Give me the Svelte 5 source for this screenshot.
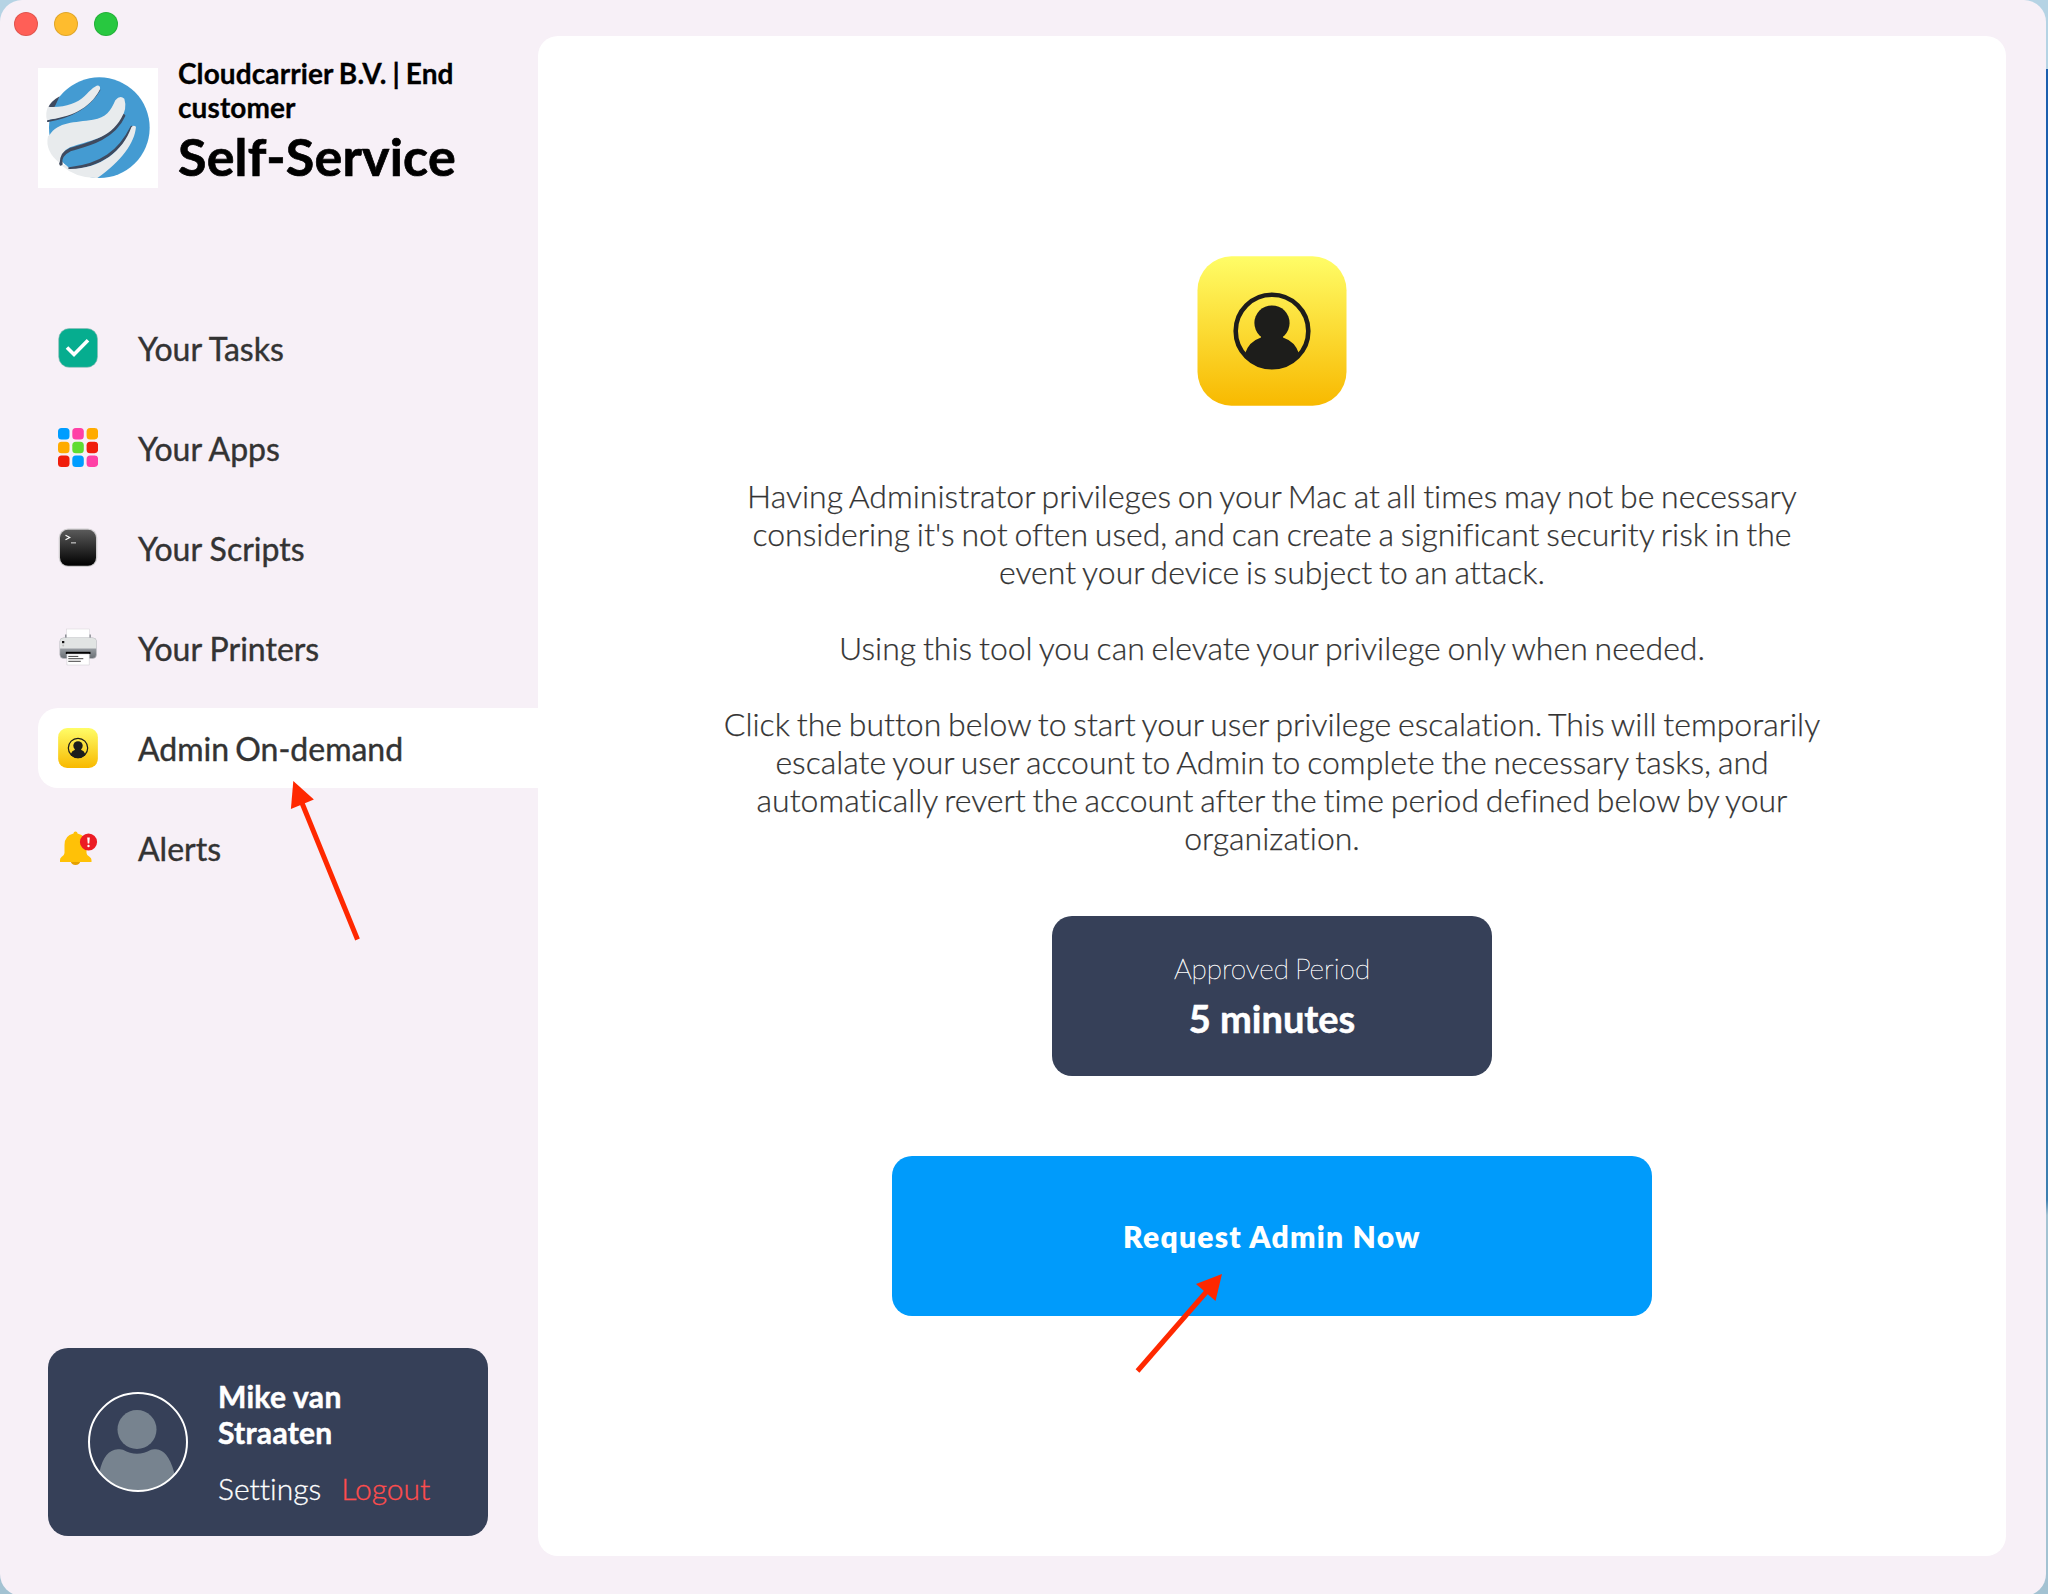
<script lang="ts">
    type NavItem = {
        id: string;
        label: string;
    };

    const navItems: NavItem[] = [
        { id: 'tasks', label: 'Your Tasks' },
        { id: 'apps', label: 'Your Apps' },
        { id: 'scripts', label: 'Your Scripts' },
        { id: 'printers', label: 'Your Printers' },
        { id: 'admin', label: 'Admin On-demand' },
        { id: 'alerts', label: 'Alerts' },
    ];

    const tiles = [
        '#009dff', '#ff40a6', '#ffab00',
        '#ffab00', '#5fdc32', '#f01d0c',
        '#f01d0c', '#009dff', '#ff40a6',
    ];

    let active = $state('admin');
</script>

{#snippet adminIcon(large: boolean)}
    <svg class={large ? 'hero-icon' : 'nav-icon'} viewBox="0 0 150 150" aria-hidden="true">
        <defs>
            <linearGradient id={large ? 'gold-lg' : 'gold-sm'} x1="0" y1="0" x2="0" y2="1">
                <stop offset="0" stop-color="#fffd67" />
                <stop offset="1" stop-color="#f8b900" />
            </linearGradient>
            <clipPath id={large ? 'ring-lg' : 'ring-sm'}>
                <circle cx="75" cy="75" r="38" />
            </clipPath>
        </defs>
        <rect x=".5" y=".3" width="149" height="149.400" rx="34" fill="url(#{large ? 'gold-lg' : 'gold-sm'})" />
        <circle cx="75" cy="75" r="36.3" fill="none" stroke="#1d1d1b" stroke-width="4.6" />
        <g clip-path="url(#{large ? 'ring-lg' : 'ring-sm'})" fill="#1d1d1b">
            <circle cx="75" cy="67" r="17.6" />
            <path d="M64 76h22v5.500q12 4 16 16l4 25H44l4-25q4-12 16-16z" />
        </g>
    </svg>
{/snippet}

<div class="desktop">
    <div class="window">
        <aside class="sidebar">
            <div class="lights">
                <span class="light close"></span>
                <span class="light minimize"></span>
                <span class="light zoom"></span>
            </div>

            <header class="brand">
                <svg class="logo" viewBox="0 0 360 360" aria-hidden="true">
                    <rect width="360" height="360" fill="#fff" />
                    <circle cx="184" cy="179" r="151" fill="#449bd2" />
                    <!-- shadows first, then the pale bands on top -->
                    <g fill="none" stroke="#3f4a5f" stroke-linecap="round">
                        <path d="M30 159Q140 140 184 66" stroke-width="6" />
                        <path d="M69 288Q62 262 96 245C140 232 225 215 257 143" stroke-width="10" />
                        <path d="M94 302C190 292 245 250 281 178" stroke-width="9" />
                    </g>
                    <path d="M65 85Q38 100 30 120l20-4z" fill="#3f4a5f" />
                    <g fill="#e8ebed">
                        <path d="M30 116C75 120 115 108 140 84C158 65 166 58 176 53q12-2 10 11C155 125 95 148 27 156q-6-20 3-40z" />
                        <path d="M34 202C60 160 110 164 165 155C205 150 218 128 232 97Q246 80 259 92Q268 122 250 150C215 214 150 218 96 238Q66 252 65 285Q20 250 30 205z" />
                        <path d="M70 292Q85 286 92 303C185 305 255 250 280 178q5-9 14-2C290 225 250 280 178 330Q115 332 70 292z" />
                    </g>
                </svg>
                <div class="brand-text">
                    <p class="company">Cloudcarrier B.V. | End customer</p>
                    <h1>Self-Service</h1>
                </div>
            </header>

            <nav>
                {#each navItems as item (item.id)}
                    <button class="nav-item" class:active={active === item.id} onclick={() => (active = item.id)}>
                        {#if item.id === 'tasks'}
                            <svg class="nav-icon" viewBox="0 0 40 40" aria-hidden="true">
                                <rect x=".7" y=".5" width="38.8" height="38.8" rx="10.5" fill="#06ad8f" stroke="#8fb9b5" stroke-width=".6" />
                                <path d="m9 19.5 7 7L30 12.3" fill="none" stroke="#fff" stroke-width="3.6" />
                            </svg>
                        {:else if item.id === 'apps'}
                            <svg class="nav-icon" viewBox="0 0 40 40" aria-hidden="true">
                                {#each tiles as fill, i}
                                    <rect x={(i % 3) * 14.3} y={Math.floor(i / 3) * 13.7} width="11.5" height="11.5" rx="3.5" {fill} />
                                {/each}
                            </svg>
                        {:else if item.id === 'scripts'}
                            <svg class="nav-icon" viewBox="0 0 40 40" aria-hidden="true">
                                <defs>
                                    <linearGradient id="terminal" x1="0" y1="0" x2="0" y2="1">
                                        <stop offset="0" stop-color="#5a5a5a" />
                                        <stop offset="1" stop-color="#000" />
                                    </linearGradient>
                                </defs>
                                <rect x=".7" y=".5" width="38.6" height="38.6" rx="9.5" fill="#cfcdcf" />
                                <rect x="2" y="1.8" width="36" height="36" rx="8" fill="url(#terminal)" />
                                <path d="m7.5 7.3 4.3 2.2-4.3 2.3" fill="none" stroke="#fff" stroke-width="1.1" />
                                <path d="M13 14.8h5" stroke="#aaa" stroke-width="1.5" />
                            </svg>
                        {:else if item.id === 'printers'}
                            <svg class="nav-icon" viewBox="0 0 40 40" aria-hidden="true">
                                <defs>
                                    <linearGradient id="printer" x1="0" y1="0" x2="0" y2="1">
                                        <stop offset=".5" stop-color="#9a9fa4" />
                                        <stop offset="1" stop-color="#686d73" />
                                    </linearGradient>
                                </defs>
                                <path d="M7.200 6.500h25.500V11H7.200z" fill="#72777d" />
                                <rect x="8.700" y="1" width="22.600" height="12" fill="#fff" stroke="#d6d3d8" stroke-width=".5" />
                                <rect x="1.800" y="9.800" width="36.700" height="20.700" rx="4" fill="url(#printer)" stroke="#c4c5c9" stroke-width=".6" />
                                <path d="M2 20.500V14q0-4 4-4h28.300q4 0 4 4v6.500z" fill="#e1e4e3" />
                                <path d="M4 13h2.300v2.200H4z" fill="#111" />
                                <circle cx="5.200" cy="17.500" r="1" fill="#bbb" />
                                <path d="M7.800 23.800h24.700v2.200H7.800z" fill="#000" />
                                <path d="M8.900 26h22.400v11H8.900z" fill="#fff" stroke="#cac8cc" stroke-width=".5" />
                                <path d="M10.300 28.400h10M10.300 30.700h15M10.300 33.300h12.500" stroke="#444" />
                            </svg>
                        {:else if item.id === 'admin'}
                            {@render adminIcon(false)}
                        {:else}
                            <svg class="nav-icon" viewBox="0 0 40 40" aria-hidden="true">
                                <path d="M12.500 33h10q-1 4-5 4t-5-4z" fill="#e5a100" />
                                <path d="M15.500 5.500a2 2 0 0 1 4 0q9 2 9 11.500v8q0 2 3 3.700 2 1.300 2 3.300v2H2v-2q0-2 1.500-3 3-2 3-4v-8Q6.500 7.500 15.500 5.500z" fill="#ffc107" />
                                <circle cx="30.500" cy="14" r="8.600" fill="#ec1c24" />
                                <path d="M29.200 9.500h2.600l-.5 6h-1.600z" fill="#fff" />
                                <circle cx="30.500" cy="18" r="1.200" fill="#fff" />
                            </svg>
                        {/if}
                        <span>{item.label}</span>
                    </button>
                {/each}
            </nav>

            <div class="profile">
                <svg class="avatar" viewBox="0 0 100 100" aria-hidden="true">
                    <defs>
                        <clipPath id="avatar-clip"><circle cx="50" cy="50" r="49" /></clipPath>
                    </defs>
                    <g clip-path="url(#avatar-clip)" fill="#77838f">
                        <circle cx="49" cy="37.500" r="19.500" />
                        <path d="M11.500 80Q16 58 30 57.300q3-.5 5 .5 14 8 28 0 2-1 5-.5Q80 58 86 80v20H11.500z" />
                    </g>
                    <circle cx="50" cy="50" r="49" fill="none" stroke="#fff" stroke-width="2" />
                </svg>
                <div class="profile-text">
                    <strong>Mike van Straaten</strong>
                    <div class="profile-links">
                        <a href="#settings">Settings</a>
                        <a class="logout" href="#logout">Logout</a>
                    </div>
                </div>
            </div>
        </aside>

        <main>
            {@render adminIcon(true)}
            <div class="copy">
                <p>
                    Having Administrator privileges on your Mac at all times may not be necessary considering it's not
                    often used, and can create a significant security risk in the event your device is subject to an
                    attack.
                </p>
                <p>Using this tool you can elevate your privilege only when needed.</p>
                <p>
                    Click the button below to start your user privilege escalation. This will temporarily escalate your
                    user account to Admin to complete the necessary tasks, and automatically revert the account after
                    the time period defined below by your organization.
                </p>
            </div>
            <div class="period">
                <span>Approved Period</span>
                <strong>5 minutes</strong>
            </div>
            <button class="request">Request Admin Now</button>
        </main>
    </div>

    <!-- red pointers laid over the window -->
    <svg class="pointers" viewBox="0 0 2048 1594" aria-hidden="true">
        <path d="M357.500 939.500 302 803" />
        <path class="head" d="m293.300 781 20.600 18.500-23 9.500z" />
        <path d="M1137.500 1371 1208 1290" />
        <path class="head" d="m1222 1274-6.500 27-19.500-17z" />
    </svg>
</div>

<style>
    :global(body) {
        margin: 0;
    }

    .desktop {
        position: relative;
        width: 2048px;
        height: 1594px;
        overflow: hidden;
        background: linear-gradient(#b5d3e4 0 69px, #1c5fae 69px 300px, #3d7fb0 1200px, #a3c2d2 1215px);
        font-family: Lato, sans-serif;
        font-variant-ligatures: none;
        color: #333;
    }

    .window {
        display: flex;
        box-sizing: border-box;
        width: 2046px;
        height: 1596px;
        padding: 0 40px 40px 0;
        border-radius: 22px;
        background: #f7f0f7;
    }

    .sidebar {
        display: flex;
        flex-direction: column;
        width: 538px;
        flex: none;
    }

    .lights {
        display: flex;
        gap: 16px;
        padding: 12px 14px 0;
    }

    .light {
        box-sizing: border-box;
        width: 24px;
        height: 24px;
        border: 1px solid rgba(0, 0, 0, 0.12);
        border-radius: 50%;
    }

    .close {
        background: #ff5f57;
    }

    .minimize {
        background: #febc2e;
    }

    .zoom {
        background: #28c840;
    }

    .brand {
        display: flex;
        gap: 20px;
        height: 140px;
        padding: 20px 60px 0 38px;
    }

    .logo {
        width: 120px;
        height: 120px;
        margin-top: 12px;
        flex: none;
    }

    .company {
        margin: 0;
        font-size: 28px;
        font-weight: 700;
        line-height: 34px;
        letter-spacing: 0.1px;
        word-spacing: -1px;
        color: #000;
        -webkit-text-stroke: 0.3px;
    }

    h1 {
        margin: 0;
        font-size: 52px;
        font-weight: 700;
        line-height: 64px;
        letter-spacing: 0.2px;
        color: #000;
        -webkit-text-stroke: 0.7px;
    }

    nav {
        display: flex;
        flex-direction: column;
        gap: 20px;
        margin: 112px 0 0 38px;
    }

    .nav-item {
        display: flex;
        align-items: center;
        gap: 40px;
        height: 80px;
        padding: 0 20px;
        border: 0;
        border-radius: 20px 0 0 20px;
        background: none;
        font: 400 32px/38px Lato, sans-serif;
        color: #333;
        text-align: left;
        cursor: pointer;
        -webkit-text-stroke: 0.4px;
    }

    .nav-item span {
        margin-top: 2px;
    }

    .nav-item.active {
        background: #fff;
        word-spacing: -2px;
    }

    .nav-icon {
        width: 40px;
        height: 40px;
        flex: none;
    }

    .profile {
        display: flex;
        align-items: center;
        box-sizing: border-box;
        gap: 30px;
        width: 440px;
        height: 188px;
        margin: auto 0 20px 48px;
        padding: 0 40px;
        border-radius: 20px;
        background: #364058;
        color: #fff;
    }

    .avatar {
        width: 100px;
        height: 100px;
        flex: none;
    }

    .profile-text strong {
        display: block;
        width: 150px;
        font-size: 30px;
        font-weight: 700;
        line-height: 36px;
        letter-spacing: 0.3px;
        -webkit-text-stroke: 0.5px;
    }

    .profile-links {
        display: flex;
        gap: 20px;
        margin-top: 20px;
        font-size: 30px;
        font-weight: 300;
        line-height: 36px;
        -webkit-text-stroke: 0.3px;
    }

    .profile-links a {
        color: inherit;
        text-decoration: none;
    }

    .profile-links .logout {
        color: #ff4d4d;
    }

    main {
        display: flex;
        flex-direction: column;
        align-items: center;
        flex: 1;
        box-sizing: border-box;
        margin-top: 36px;
        padding-top: 220px;
        border-radius: 20px;
        background: #fff;
    }

    .hero-icon {
        width: 150px;
        height: 150px;
        flex: none;
    }

    .copy {
        width: 1108px;
        margin-top: 71px;
        font-size: 32px;
        font-weight: 300;
        line-height: 38px;
        word-spacing: -1.9px;
        text-align: center;
        -webkit-text-stroke: 0.25px;
    }

    .copy p {
        margin: 0 0 38px;
    }

    .period {
        display: flex;
        flex-direction: column;
        align-items: center;
        box-sizing: border-box;
        width: 440px;
        height: 160px;
        margin-top: 21px;
        padding-top: 35px;
        border-radius: 20px;
        background: #364058;
        color: #fff;
    }

    .period span {
        font-size: 28px;
        font-weight: 200;
        line-height: 34px;
        word-spacing: -2px;
        -webkit-text-stroke: 0.4px;
    }

    .period strong {
        margin-top: 10px;
        font-size: 38px;
        font-weight: 700;
        line-height: 46px;
        -webkit-text-stroke: 0.5px;
    }

    .request {
        width: 760px;
        height: 160px;
        margin-top: 80px;
        border: 0;
        border-radius: 20px;
        background: #009bfb;
        font: 800 30px/36px Lato, sans-serif;
        letter-spacing: 1.25px;
        color: #fff;
        cursor: pointer;
    }

    .pointers {
        position: absolute;
        inset: 0;
        fill: none;
        stroke: #ff2800;
        stroke-width: 5;
        pointer-events: none;
    }

    .pointers .head {
        fill: #ff2800;
        stroke: none;
    }
</style>
